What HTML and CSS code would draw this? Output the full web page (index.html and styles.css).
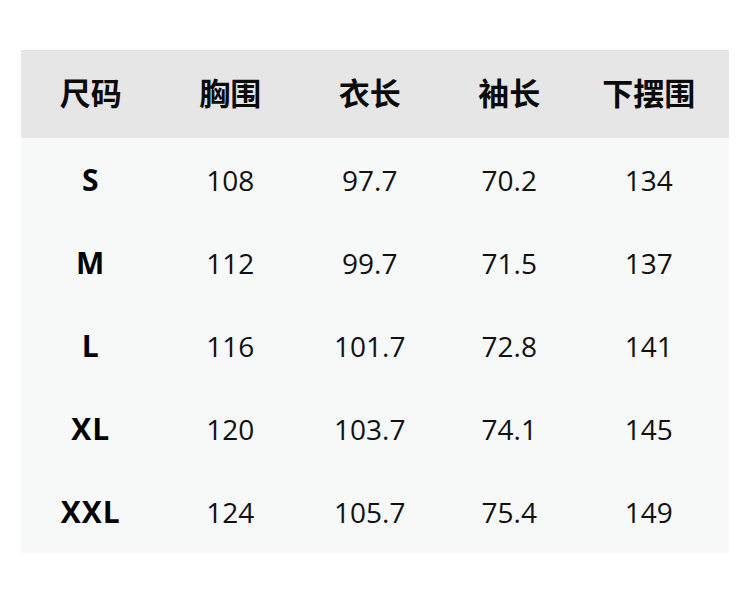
FILE: index.html
```html
<!DOCTYPE html>
<html lang="zh-CN">
<head>
<meta charset="utf-8">
<title>尺码表</title>
<link rel="stylesheet" href="styles.css">
</head>
<body>
<div class="page">
  <div class="table">
    <div class="row head">
      <div class="cell">尺码</div>
      <div class="cell">胸围</div>
      <div class="cell">衣长</div>
      <div class="cell">袖长</div>
      <div class="cell">下摆围</div>
    </div>
    <div class="body">
      <div class="row"><div class="cell size">S</div><div class="cell">108</div><div class="cell">97.7</div><div class="cell">70.2</div><div class="cell">134</div></div>
      <div class="row"><div class="cell size">M</div><div class="cell">112</div><div class="cell">99.7</div><div class="cell">71.5</div><div class="cell">137</div></div>
      <div class="row"><div class="cell size">L</div><div class="cell">116</div><div class="cell">101.7</div><div class="cell">72.8</div><div class="cell">141</div></div>
      <div class="row"><div class="cell size">XL</div><div class="cell">120</div><div class="cell">103.7</div><div class="cell">74.1</div><div class="cell">145</div></div>
      <div class="row"><div class="cell size">XXL</div><div class="cell">124</div><div class="cell">105.7</div><div class="cell">75.4</div><div class="cell">149</div></div>
    </div>
  </div>
</div>
</body>
</html>
```
FILE: styles.css
```css
html, body {
  margin: 0;
  padding: 0;
  background: #ffffff;
}
body {
  width: 750px;
  height: 593px;
  font-family: "Open Sans", "Noto Sans CJK SC", sans-serif;
  color: #111111;
}
.page {
  padding: 50px 21px 0 21px;
}
.table {
  width: 708px;
}
.row {
  display: grid;
  grid-template-columns: repeat(5, 139.5px);
  padding-right: 10.5px;
}
.head {
  background: #e6e6e6;
  height: 88px;
  box-sizing: border-box;
  padding-bottom: 6px;
  align-items: center;
  font-family: "Noto Sans CJK SC", sans-serif;
  font-weight: 700;
  font-size: 31px;
  color: #0a0a0a;
}
.body {
  background: #f7f8f8;
}
.body .row {
  height: 83px;
  align-items: center;
  font-size: 28px;
}
.cell {
  text-align: center;
  line-height: 1;
}
.size {
  font-weight: 700;
  font-size: 30px;
  letter-spacing: 1px;
  color: #000000;
}
```
